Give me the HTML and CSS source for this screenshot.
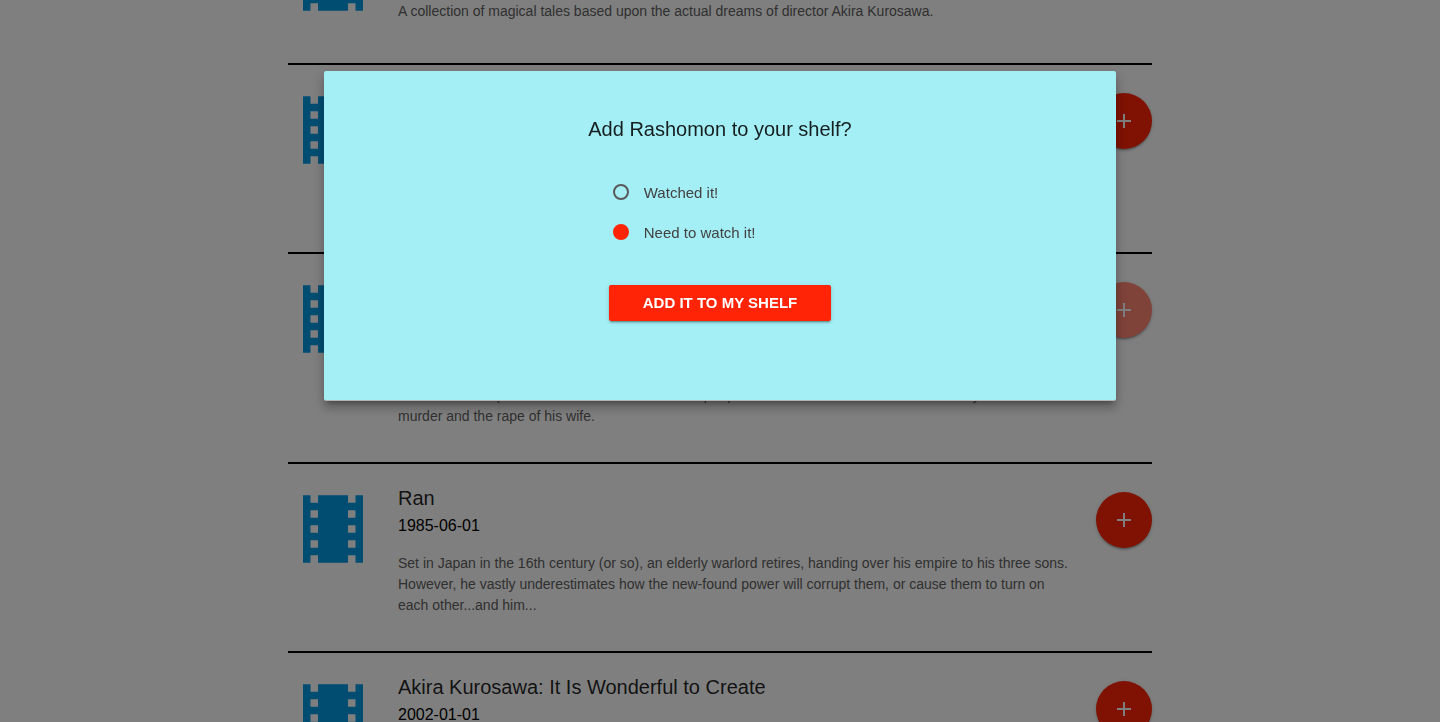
FILE: index.html
```html
<!DOCTYPE html>
<html lang="en">
<head>
<meta charset="utf-8">
<title>Movie shelf</title>
<link rel="stylesheet" href="styles.css">
</head>
<body>
<svg class="sprite" aria-hidden="true">
  <symbol id="film" viewBox="0 0 24 24"><path d="M18 3v2h-2V3H8v2H6V3H4v18h2v-2h2v2h8v-2h2v2h2V3h-2zM8 17H6v-2h2v2zm0-4H6v-2h2v2zm0-4H6V7h2v2zm10 8h-2v-2h2v2zm0-4h-2v-2h2v2zm0-4h-2V7h2v2z"/></symbol>
  <symbol id="plus" viewBox="0 0 24 24"><path d="M19 13h-6v6h-2v-6H5v-2h6V5h2v6h6v2z"/></symbol>
</svg>

<main class="movies">
  <article class="movie">
    <svg class="movie-icon" aria-hidden="true"><use href="#film"/></svg>
    <div class="movie-text">
      <h2 class="movie-title">Dreams</h2>
      <p class="movie-date">1990-05-11</p>
      <p class="movie-overview">A collection of magical tales based upon the actual dreams of director Akira Kurosawa.</p>
    </div>
    <button class="add" type="button" aria-label="Add Dreams"><svg class="add-icon"><use href="#plus"/></svg></button>
  </article>
  <article class="movie">
    <svg class="movie-icon" aria-hidden="true"><use href="#film"/></svg>
    <div class="movie-text">
      <h2 class="movie-title">Seven Samurai</h2>
      <p class="movie-date">1954-04-26</p>
      <p class="movie-overview">A samurai answers a village's request for protection after he falls on hard times. The town needs protection from bandits, so the samurai gathers six others to help him teach the people how to defend themselves, and the villagers provide the samurai with three small meals a day.</p>
    </div>
    <button class="add" type="button" aria-label="Add Seven Samurai"><svg class="add-icon"><use href="#plus"/></svg></button>
  </article>
  <article class="movie">
    <svg class="movie-icon" aria-hidden="true"><use href="#film"/></svg>
    <div class="movie-text">
      <h2 class="movie-title">Rashomon</h2>
      <p class="movie-date">1950-12-26</p>
      <p class="movie-overview">Brimming with action while incisively examining the nature of truth, Rashomon is perhaps the finest film ever to investigate the philosophy of justice. Through an ingenious use of camera and flashbacks, Kurosawa reveals the complexities of human nature as four people recount different versions of the story of a man's murder and the rape of his wife.</p>
    </div>
    <button class="add add-active" type="button" aria-label="Add Rashomon"><svg class="add-icon"><use href="#plus"/></svg></button>
  </article>
  <article class="movie">
    <svg class="movie-icon" aria-hidden="true"><use href="#film"/></svg>
    <div class="movie-text">
      <h2 class="movie-title">Ran</h2>
      <p class="movie-date">1985-06-01</p>
      <p class="movie-overview">Set in Japan in the 16th century (or so), an elderly warlord retires, handing over his empire to his three sons. However, he vastly underestimates how the new-found power will corrupt them, or cause them to turn on each other...and him...</p>
    </div>
    <button class="add" type="button" aria-label="Add Ran"><svg class="add-icon"><use href="#plus"/></svg></button>
  </article>
  <article class="movie">
    <svg class="movie-icon" aria-hidden="true"><use href="#film"/></svg>
    <div class="movie-text">
      <h2 class="movie-title">Akira Kurosawa: It Is Wonderful to Create</h2>
      <p class="movie-date">2002-01-01</p>
    </div>
    <button class="add" type="button" aria-label="Add Akira Kurosawa: It Is Wonderful to Create"><svg class="add-icon"><use href="#plus"/></svg></button>
  </article>
</main>

<div class="overlay">
  <form class="modal" role="dialog" aria-labelledby="modal-title">
    <h1 class="modal-title" id="modal-title">Add Rashomon to your shelf?</h1>
    <div class="modal-body">
      <label class="choice" for="watched"><input class="radio" type="radio" name="status" id="watched">Watched it!</label>
      <label class="choice" for="need"><input class="radio" type="radio" name="status" id="need" checked>Need to watch it!</label>
      <button class="submit" type="button">Add it to my shelf</button>
    </div>
  </form>
</div>
</body>
</html>
```
FILE: styles.css
```css
* { box-sizing: border-box; }

body {
  height: 100vh;
  margin: 0;
  overflow: hidden;
  background: #fff;
  color: rgba(0, 0, 0, 0.87);
  font-family: Helvetica, "Liberation Sans", Arial, sans-serif;
  font-size: 15px;
}

h1, h2, p { margin: 0; font-weight: 400; }

.sprite { display: none; }

/* The list is shown scrolled part of the way down. */
.movies { width: 60%; margin: -90px auto 0; }

.movie {
  display: flex;
  align-items: flex-start;
  gap: 20px;
  padding: 20px 0 35px;
  border-top: 2px solid #000;
}

.movie-icon {
  flex: none;
  width: 90px;
  height: 90px;
  margin-bottom: 6px;
  fill: #039be5;
}

.movie-text { flex: 1; }
.movie-title { font-size: 20px; line-height: 28px; }
.movie-date { font-size: 16px; line-height: 28px; color: #000; }
.movie-overview { margin-top: 13px; font-size: 14px; line-height: 21px; color: #616161; }

.add {
  display: flex;
  align-items: center;
  justify-content: center;
  flex: none;
  width: 56px;
  height: 56px;
  margin-top: 8px;
  padding: 0;
  border: 0;
  border-radius: 50%;
  background: #ff2405;
  box-shadow: 0 2px 2px rgba(0, 0, 0, 0.14), 0 1px 5px rgba(0, 0, 0, 0.12), 0 3px 1px -2px rgba(0, 0, 0, 0.2);
}

.add-active { background: #ff8675; }
.add-icon { width: 24px; height: 24px; fill: #fff; }

.overlay {
  position: fixed;
  inset: 0;
  display: flex;
  align-items: flex-start;
  justify-content: center;
  padding-top: 71px;
  background: rgba(0, 0, 0, 0.5);
}

.modal {
  display: flex;
  flex-direction: column;
  align-items: center;
  width: 55%;
  padding: 44px 24px 79px;
  border-bottom: 1px solid #b3b3b3;
  border-radius: 2px;
  background: #a4eef5;
  box-shadow: 0 8px 10px 1px rgba(0, 0, 0, 0.14), 0 3px 14px 2px rgba(0, 0, 0, 0.12), 0 5px 5px -3px rgba(0, 0, 0, 0.3);
}

.modal-title { font-size: 20px; line-height: 28px; }

.modal-body { display: flex; flex-direction: column; margin-top: 29px; }

.choice {
  display: flex;
  align-items: center;
  gap: 15px;
  height: 40px;
  padding-left: 4px;
  color: #424242;
}

.radio {
  appearance: none;
  width: 16px;
  height: 16px;
  margin: 0;
  border: 2px solid #5a5a5a;
  border-radius: 50%;
}

.radio:checked { border-color: #ff2405; background: #ff2405; }

.submit {
  height: 36px;
  margin-top: 33px;
  padding: 0 34px 2px;
  border: 0;
  border-radius: 2px;
  background: #ff2405;
  color: #fff;
  font: bold 15px "Liberation Sans", Arial, sans-serif;
  text-transform: uppercase;
  box-shadow: 0 2px 2px rgba(0, 0, 0, 0.14), 0 1px 5px rgba(0, 0, 0, 0.12), 0 3px 1px -2px rgba(0, 0, 0, 0.2);
}
```
